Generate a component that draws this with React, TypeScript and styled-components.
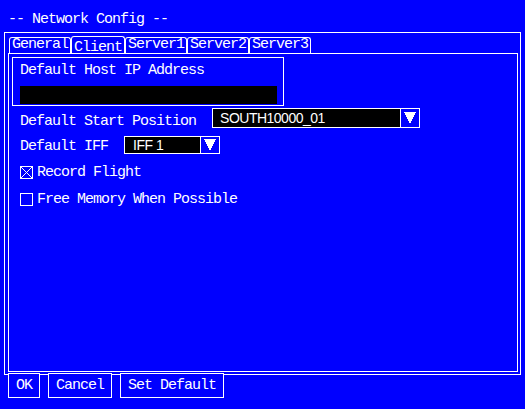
import React from "react";
import styled, { createGlobalStyle } from "styled-components";

const Global = createGlobalStyle`
  html, body { margin: 0; padding: 0; background: #0000ff; }
  body { font-family: "Liberation Mono", "DejaVu Sans Mono", monospace; }
  * { box-sizing: border-box; }
`;

const Screen = styled.div`
  width: 525px;
  height: 409px;
  background: #0000ff;
  color: #ffffff;
  display: flex;
  flex-direction: column;
  font-family: "Liberation Mono", "DejaVu Sans Mono", monospace;
  font-size: 15px;
  letter-spacing: -1px;
  line-height: 16px;
  overflow: hidden;
`;

const Title = styled.div`
  padding: 12px 0 4px 8px;
  line-height: 16px;
  white-space: pre;
`;

const Frame = styled.div`
  margin: 0 4px;
  height: 343px;
  border: 1px solid #ffffff;
  padding: 3px 2px 2px 3px;
  display: flex;
  flex-direction: column;
`;

const TabRow = styled.div`
  display: flex;
  align-items: flex-end;
  height: 17px;
  margin-left: 1px;
`;

const Tab = styled.div<{ $active?: boolean }>`
  height: ${(p) => (p.$active ? 17 : 16)}px;
  border: 1px solid #ffffff;
  border-bottom: none;
  border-radius: 3px 3px 0 0;
  padding: ${(p) => (p.$active ? 4 : 0)}px 2px 0 2px;
  line-height: 14px;
  white-space: pre;
`;

const Panel = styled.div`
  flex: 1;
  border: 1px solid #ffffff;
  padding: 3px;
  display: flex;
  flex-direction: column;
`;

const GroupBox = styled.div`
  width: 272px;
  height: 49px;
  border: 1px solid #ffffff;
  padding: 5px 6px 1px 7px;
  display: flex;
  flex-direction: column;
`;

const Label = styled.div<{ $top?: number }>`
  line-height: 16px;
  white-space: pre;
  margin-top: ${(p) => p.$top ?? 0}px;
`;

const TextInput = styled.div`
  margin-top: 7px;
  height: 18px;
  background: #000000;
`;

const Form = styled.div`
  padding-left: 8px;
  display: flex;
  flex-direction: column;
`;

const Row = styled.div<{ $top: number; $h: number }>`
  display: flex;
  align-items: flex-start;
  gap: 16px;
  height: ${(p) => p.$h}px;
  margin-top: ${(p) => p.$top}px;
`;

const Dropdown = styled.div<{ $h: number }>`
  display: flex;
  height: ${(p) => p.$h}px;
  border: 1px solid #ffffff;
`;

const Field = styled.div<{ $w: number; $pad: number }>`
  width: ${(p) => p.$w}px;
  height: 100%;
  background: #000000;
  padding-left: ${(p) => p.$pad}px;
  display: flex;
  align-items: center;
  font-family: "Liberation Sans", Arial, sans-serif;
  font-size: 14px;
  letter-spacing: -0.5px;
  white-space: pre;
`;

const ArrowButton = styled.div`
  width: 19px;
  height: 100%;
  border-left: 1px solid #ffffff;
  background: #0000ff;
  display: flex;
  align-items: center;
  justify-content: center;
`;

const CheckRow = styled.div<{ $top: number }>`
  display: flex;
  align-items: flex-start;
  gap: 4px;
  height: 16px;
  margin-top: ${(p) => p.$top}px;
`;

const Box = styled.div`
  width: 13px;
  height: 13px;
  margin-top: 1px;
  border: 1px solid #ffffff;
  display: flex;
`;

const ButtonRow = styled.div`
  display: flex;
  gap: 8px;
  margin: -2px 0 0 8px;
`;

const Button = styled.div`
  height: 25px;
  border: 1px solid #ffffff;
  background: #0000ff;
  padding: 0 7px;
  line-height: 23px;
  white-space: pre;
`;

const Arrow = () => (
  <svg width="12" height="12" viewBox="0 0 12 12" shapeRendering="crispEdges">
    <polygon points="0,0 12,0 6,12" fill="#ffffff" />
  </svg>
);

const Cross = () => (
  <svg width="11" height="11" viewBox="0 0 11 11" shapeRendering="crispEdges">
    <line x1="0" y1="0" x2="11" y2="11" stroke="#ffffff" strokeWidth="1" />
    <line x1="11" y1="0" x2="0" y2="11" stroke="#ffffff" strokeWidth="1" />
  </svg>
);

export default function App() {
  return (
    <>
      <Global />
      <Screen>
        <Title>-- Network Config --</Title>
        <Frame>
          <TabRow>
            <Tab>General</Tab>
            <Tab $active>Client</Tab>
            <Tab>Server1</Tab>
            <Tab>Server2</Tab>
            <Tab>Server3</Tab>
          </TabRow>
          <Panel>
            <GroupBox>
              <Label>Default Host IP Address</Label>
              <TextInput />
            </GroupBox>
            <Form>
              <Row $top={2} $h={20}>
                <Label $top={6}>Default Start Position</Label>
                <Dropdown $h={20}>
                  <Field $w={187} $pad={7}>SOUTH10000_01</Field>
                  <ArrowButton>
                    <Arrow />
                  </ArrowButton>
                </Dropdown>
              </Row>
              <Row $top={8} $h={18}>
                <Label $top={3}>Default IFF</Label>
                <Dropdown $h={18}>
                  <Field $w={75} $pad={8}>IFF 1</Field>
                  <ArrowButton>
                    <Arrow />
                  </ArrowButton>
                </Dropdown>
              </Row>
              <CheckRow $top={11}>
                <Box>
                  <Cross />
                </Box>
                <Label>Record Flight</Label>
              </CheckRow>
              <CheckRow $top={11}>
                <Box />
                <Label>Free Memory When Possible</Label>
              </CheckRow>
            </Form>
          </Panel>
        </Frame>
        <ButtonRow>
          <Button>OK</Button>
          <Button>Cancel</Button>
          <Button>Set Default</Button>
        </ButtonRow>
      </Screen>
    </>
  );
}
